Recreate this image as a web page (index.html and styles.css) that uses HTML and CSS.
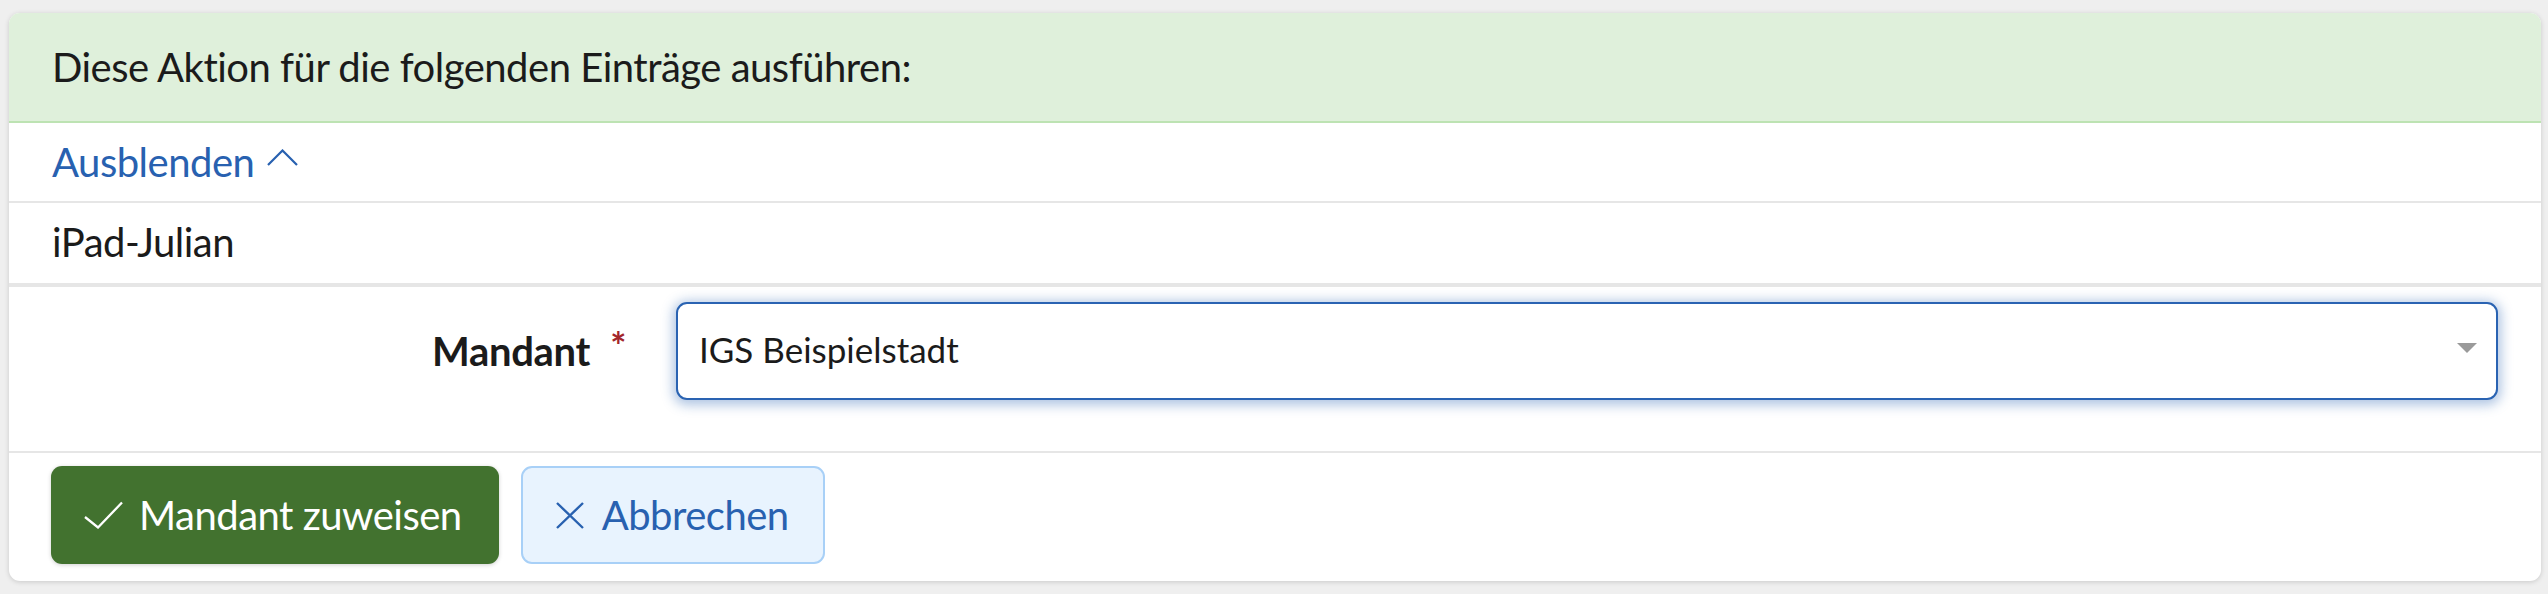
FILE: index.html
```html
<!DOCTYPE html>
<html lang="de">
<head>
<meta charset="utf-8">
<title>Mandant zuweisen</title>
<link rel="stylesheet" href="styles.css">
</head>
<body>
<div class="card">
  <div class="card-header">Diese Aktion für die folgenden Einträge ausführen:</div>
  <div class="toggle-row">
    <a class="toggle" href="#">Ausblenden<svg class="chevron" viewBox="0 0 31 17" width="31" height="17"><path d="M1 16 L15.5 1.5 L30 16" fill="none" stroke="currentColor" stroke-width="2.2"/></svg></a>
  </div>
  <div class="entry-row">iPad-Julian</div>
  <div class="form-row">
    <label class="form-label">Mandant<span class="req">*</span></label>
    <div class="select">
      <span class="select-value">IGS Beispielstadt</span>
      <span class="caret"></span>
    </div>
  </div>
  <div class="actions">
    <button class="btn btn-primary" type="button"><svg class="icon-check" viewBox="0 0 39 28" width="39" height="28"><path d="M1 16 L14 26.5 L38 1.5" fill="none" stroke="currentColor" stroke-width="2.3"/></svg>Mandant zuweisen</button>
    <button class="btn btn-cancel" type="button"><svg class="icon-x" viewBox="0 0 28 27" width="28" height="27"><path d="M1 1 L27 26 M27 1 L1 26" fill="none" stroke="currentColor" stroke-width="2.4"/></svg>Abbrechen</button>
  </div>
</div>
</body>
</html>
```

FILE: styles.css
```css
* { box-sizing: border-box; }

html, body {
  margin: 0;
  background: #efefef;
}

body {
  padding: 13px 7px 12px 9px;
  font-family: Lato, "Noto Sans", sans-serif;
  color: #1b1b1b;
}

.card {
  background: #fff;
  border-radius: 11px;
  box-shadow: 0 1px 5px rgba(0, 0, 0, 0.16);
  overflow: hidden;
}

.card-header {
  height: 110px;
  background: #dff0db;
  border-bottom: 2px solid #bde3b3;
  padding: 0 43px;
  display: flex;
  align-items: center;
  font-size: 40px;
  letter-spacing: -0.5px;
}

.toggle-row {
  height: 80px;
  border-bottom: 2px solid #e6e6e6;
  padding: 0 43px;
  display: flex;
  align-items: center;
}

.toggle {
  color: #2861b0;
  text-decoration: none;
  font-size: 40px;
  letter-spacing: -0.5px;
  display: inline-flex;
  align-items: center;
}

.chevron {
  margin-left: 13px;
  margin-top: -10px;
}

.entry-row {
  height: 84px;
  border-bottom: 4px solid #e6e6e6;
  padding: 0 43px 2px;
  display: flex;
  align-items: center;
  font-size: 40px;
  letter-spacing: -0.5px;
}

.form-row {
  display: grid;
  grid-template-columns: 617px 1fr;
  column-gap: 50px;
  align-items: center;
  padding: 15px 43px 51px 0;
  border-bottom: 2px solid #e6e6e6;
}

.form-label {
  justify-self: end;
  font-weight: 700;
  font-size: 40px;
  letter-spacing: -0.3px;
  display: flex;
  align-items: center;
}

.req {
  color: #a3262b;
  font-size: 38px;
  font-weight: 700;
  margin-left: 20px;
  margin-top: -12px;
}

.select {
  height: 98px;
  border: 2px solid #2a63b2;
  border-radius: 11px;
  box-shadow: 0 2px 12px 3px rgba(42, 99, 178, 0.38);
  padding: 0 19px 0 21px;
  display: flex;
  align-items: center;
  justify-content: space-between;
  font-size: 35px;
  background: #fff;
}

.select-value {
  margin-top: -4px;
}

.caret {
  width: 0;
  height: 0;
  border-left: 10px solid transparent;
  border-right: 10px solid transparent;
  border-top: 10px solid #9a9a9a;
  margin-top: -6px;
}

.actions {
  display: flex;
  gap: 22px;
  padding: 13px 0 17px 42px;
}

.btn {
  height: 98px;
  border-radius: 11px;
  display: inline-flex;
  align-items: center;
  font-family: inherit;
  font-size: 40px;
  letter-spacing: -0.5px;
  cursor: pointer;
}

.btn svg {
  flex: none;
}

.btn-primary {
  background: #42722f;
  color: #fff;
  border: none;
  padding: 0 37px 0 33px;
  box-shadow: 0 1px 4px rgba(0, 0, 0, 0.18);
}

.icon-check {
  margin-right: 16px;
}

.btn-cancel {
  background: #e8f3fe;
  color: #2861b0;
  border: 2px solid #a8d0f7;
  padding: 0 34px 0 33px;
}

.icon-x {
  margin-right: 18px;
}
```
